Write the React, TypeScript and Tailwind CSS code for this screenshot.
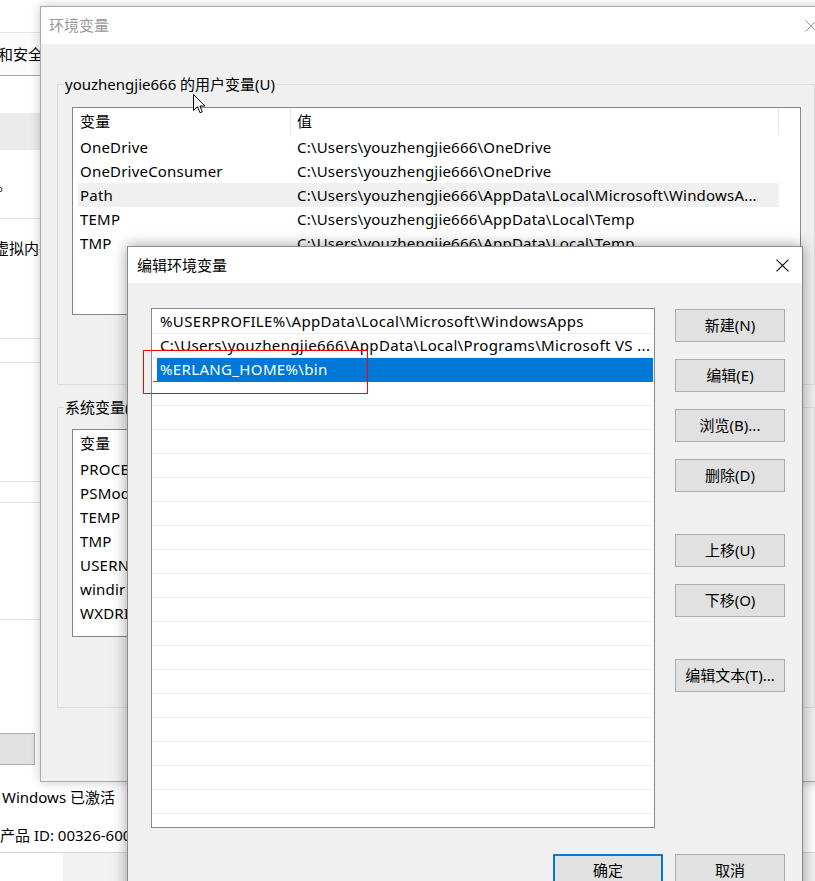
const userVars = [
  ["OneDrive", "C:\\Users\\youzhengjie666\\OneDrive"],
  ["OneDriveConsumer", "C:\\Users\\youzhengjie666\\OneDrive"],
  ["Path", "C:\\Users\\youzhengjie666\\AppData\\Local\\Microsoft\\WindowsA..."],
  ["TEMP", "C:\\Users\\youzhengjie666\\AppData\\Local\\Temp"],
  ["TMP", "C:\\Users\\youzhengjie666\\AppData\\Local\\Temp"],
];

const systemVars = [
  ["PROCESSOR_ARCHITECTURE", "AMD64"],
  ["PSModulePath", "%ProgramFiles%\\WindowsPowerShell\\Modules;C:\\WINDOWS\\system32\\..."],
  ["TEMP", "C:\\WINDOWS\\TEMP"],
  ["TMP", "C:\\WINDOWS\\TEMP"],
  ["USERNAME", "SYSTEM"],
  ["windir", "C:\\WINDOWS"],
  ["WXDRIVE_START_ARGS", "--wxdrive-setting=0 --disable-gpu --disable-software-rasterizer"],
];

const pathEntries = [
  "%USERPROFILE%\\AppData\\Local\\Microsoft\\WindowsApps",
  "C:\\Users\\youzhengjie666\\AppData\\Local\\Programs\\Microsoft VS ...",
  "%ERLANG_HOME%\\bin",
];

function CloseIcon({ className }: { className?: string }) {
  return (
    <svg viewBox="0 0 12 12" className={className} fill="none" aria-hidden="true">
      <path d="M0.5 0.5 11.5 11.5M11.5 0.5 0.5 11.5" stroke="currentColor" strokeWidth="1" />
    </svg>
  );
}

function SettingsWindow() {
  return (
    <div className="flex h-full w-full flex-col bg-white">
      <div className="h-[33px] border-b border-[#e3e3e3]" />
      <div className="flex h-[43px] items-center border-b border-[#a6a6a6] bg-[#fbfbfb]">
        <span className="-ml-[2px] whitespace-nowrap">和安全</span>
      </div>
      <div className="h-[37px]" />
      <div className="h-[37px] bg-[#ebebeb]" />
      <div className="flex h-[69px] items-center border-b border-[#e3e3e3]">
        <span className="-ml-[3px]">。</span>
      </div>
      <div className="h-[120px] border-b border-[#e3e3e3] pt-[19px]">
        <span className="-ml-[6px] block whitespace-nowrap leading-[20px]">虚拟内存</span>
      </div>
      <div className="h-[24px] border-b border-[#e3e3e3]" />
      <div className="h-[119px] border-b border-[#e3e3e3]" />
      <div className="h-[21px] border-b border-[#e3e3e3]" />
      <div className="h-[117px] border-b border-[#e3e3e3]" />
      <div className="h-[162px] pt-[113px]">
        <div className="-ml-px h-[32px] w-[36px] border border-[#adadad] bg-[#e1e1e1]" />
      </div>
      <div className="h-[70px] pt-[5px] leading-[20px]">
        <div className="whitespace-nowrap pl-[2px]">Windows 已激活</div>
        <div className="mt-[18px] whitespace-nowrap">产品 ID: 00326-60000-00000-AA123</div>
      </div>
      <div className="flex h-[29px] border-t border-[#d6d6d6]">
        <div className="w-[63px] bg-white" />
        <div className="flex-1 bg-[#f2f2f2]" />
      </div>
    </div>
  );
}

function VarList({ rows, highlight }: { rows: string[][]; highlight?: number }) {
  return (
    <div className="h-[208px] w-[729px] overflow-hidden border border-[#828790] bg-white pl-[5px] tracking-[0.2px]">
      <div className="flex h-[27px] items-center">
        <div className="flex h-full w-[213px] items-center border-r border-[#e5e5e5] pl-[2px]">变量</div>
        <div className="flex h-full w-[488px] items-center border-r border-[#e5e5e5] pl-[6px]">值</div>
      </div>
      {rows.map(([name, value], i) => (
        <div
          key={name + i}
          className={`flex h-[24px] w-[701px] items-center whitespace-nowrap ${
            i === highlight ? "bg-[#f0f0f0]" : ""
          }`}
        >
          <div className="w-[213px] overflow-hidden pl-[2px]">{name}</div>
          <div className="w-[488px] overflow-hidden pl-[6px]">{value}</div>
        </div>
      ))}
    </div>
  );
}

function GroupBox({ label, className, listClass, children }: { label: string; className: string; listClass: string; children: React.ReactNode }) {
  return (
    <div className={`border border-[#dcdcdc] px-[14px] ${className}`}>
      <div className="-ml-[8px] -mt-[11px] w-fit whitespace-nowrap bg-[#f0f0f0] px-[1px] leading-[20px]">
        {label}
      </div>
      <div className={listClass}>{children}</div>
    </div>
  );
}

function EnvDialog() {
  return (
    <div className="absolute left-[40px] top-[6px] flex h-[776px] w-[792px] flex-col border border-[#aaaaaa] bg-[#f0f0f0] shadow-[0_0_10px_rgba(0,0,0,0.22)]">
      <div className="flex h-[37px] shrink-0 items-center justify-between bg-white">
        <span className="pl-[8px] text-[#999999]">环境变量</span>
        <div className="flex h-full w-[40px] items-center justify-center text-[#999999]">
          <CloseIcon className="h-[12px] w-[12px]" />
        </div>
      </div>
      <div className="px-[16px] pt-[40px]">
        <GroupBox label="youzhengjie666 的用户变量(U)" className="h-[301px]" listClass="mt-[13px]">
          <VarList rows={userVars} highlight={2} />
        </GroupBox>
        <GroupBox label="系统变量(S)" className="mt-[22px] h-[301px]" listClass="mt-[12px]">
          <VarList rows={systemVars} />
        </GroupBox>
      </div>
    </div>
  );
}

function WinButton({ label, className = "", primary = false }: { label: string; className?: string; primary?: boolean }) {
  return (
    <div
      className={`flex h-[33px] w-[110px] shrink-0 items-center justify-center whitespace-nowrap bg-[#e1e1e1] ${
        primary ? "border-2 border-[#0078d7]" : "border border-[#adadad]"
      } ${className}`}
    >
      {label}
    </div>
  );
}

function EditDialog() {
  const rows = Array.from({ length: 22 }, (_, i) => pathEntries[i] ?? "");
  return (
    <div className="absolute left-[127px] top-[246px] flex h-[660px] w-[676px] flex-col border border-[#8a8a8a] bg-[#f0f0f0] shadow-[0_0_14px_rgba(0,0,0,0.38)]">
      <div className="flex h-[36px] shrink-0 items-center justify-between bg-white">
        <span className="pl-[9px]">编辑环境变量</span>
        <div className="flex h-full w-[40px] items-center justify-center text-black">
          <CloseIcon className="h-[13px] w-[13px]" />
        </div>
      </div>
      <div className="flex flex-col pl-[23px] pr-[17px] pt-[25px]">
        <div className="flex">
          <div className="h-[520px] w-[504px] overflow-hidden border border-[#828790] bg-white pt-px tracking-[0.35px]">
            {rows.map((entry, i) => {
              const selected = i === 2;
              return (
                <div key={i} className={`ml-[5px] mr-px flex h-[24px] flex-col ${selected ? "bg-[#0078d7] text-white" : ""}`}>
                  <div className="flex h-[23px] items-center whitespace-nowrap pl-[3px]">{entry}</div>
                  <div className={`-ml-[4px] h-px ${selected ? "bg-[#0078d7]" : "bg-[#eeeeee]"}`} />
                </div>
              );
            })}
          </div>
          <div className="ml-[20px] flex flex-col pt-px">
            <WinButton label="新建(N)" />
            <WinButton label="编辑(E)" className="mt-[17px]" />
            <WinButton label="浏览(B)..." className="mt-[17px]" />
            <WinButton label="删除(D)" className="mt-[17px]" />
            <WinButton label="上移(U)" className="mt-[42px]" />
            <WinButton label="下移(O)" className="mt-[17px]" />
            <WinButton label="编辑文本(T)..." className="mt-[42px]" />
          </div>
        </div>
        <div className="mt-[26px] flex justify-end gap-[12px]">
          <WinButton label="确定" primary />
          <WinButton label="取消" />
        </div>
      </div>
    </div>
  );
}

function Cursor() {
  return (
    <svg
      viewBox="0 0 13 20"
      className="absolute left-[193px] top-[94px] h-[20px] w-[13px]"
      aria-hidden="true"
    >
      <path
        d="M0.5 0.5V16.5L4.5 12.8L7 18.8L9.3 17.8L6.9 12H12Z"
        fill="#ffffff"
        stroke="#000000"
        strokeWidth="1"
        strokeLinejoin="miter"
      />
    </svg>
  );
}

export default function App() {
  return (
    <div className="relative h-[881px] w-[815px] overflow-hidden bg-white font-['Segoe_UI','Noto_Sans','Noto_Sans_CJK_SC',sans-serif] text-[15px] text-black">
      <SettingsWindow />
      <EnvDialog />
      <EditDialog />
      <div className="absolute left-[143px] top-[350px] h-[44px] w-[225px] border border-[#ff0000]" />
      <Cursor />
    </div>
  );
}
